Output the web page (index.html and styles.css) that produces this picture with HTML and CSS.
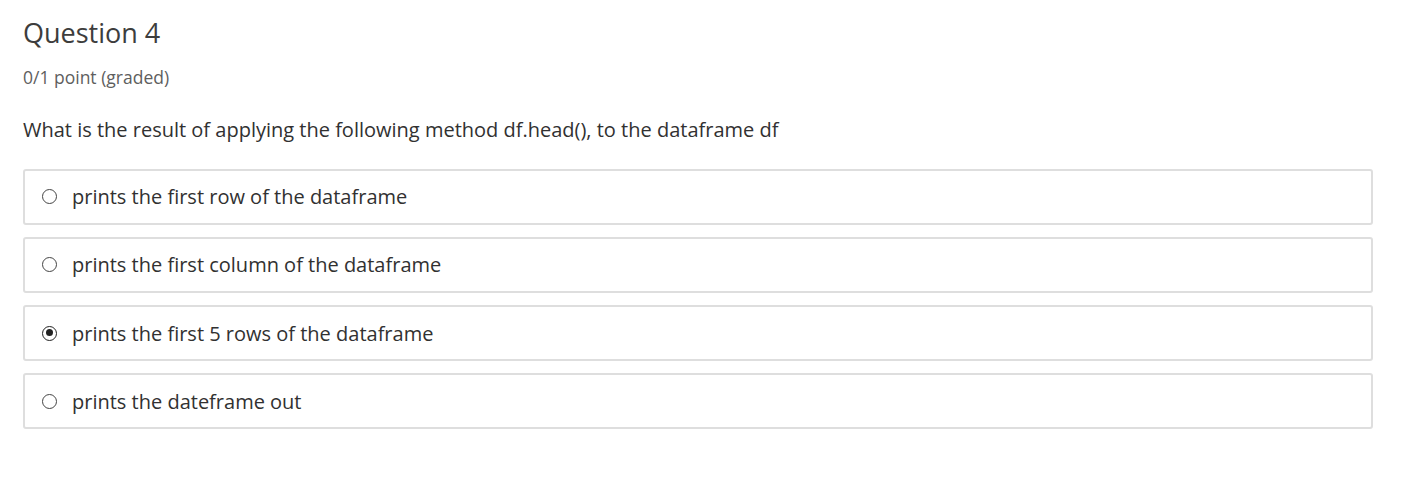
FILE: index.html
```html
<!DOCTYPE html>
<html>
<head>
<meta charset="utf-8">
<link rel="stylesheet" href="styles.css">
</head>
<body>
<div class="problem">
  <h3 class="title">Question 4</h3>
  <div class="points">0/1 point (graded)</div>
  <p class="prompt">What is the result of applying the following method df.head(), to the dataframe df</p>
  <div class="choices">
    <label class="choice"><span class="radio"></span><span class="text">prints the first row of the dataframe</span></label>
    <label class="choice"><span class="radio"></span><span class="text">prints the first column of the dataframe</span></label>
    <label class="choice"><span class="radio checked"></span><span class="text">prints the first 5 rows of the dataframe</span></label>
    <label class="choice"><span class="radio"></span><span class="text">prints the dateframe out</span></label>
  </div>
</div>
</body>
</html>
```
FILE: styles.css
```css
html, body {
  margin: 0;
  padding: 0;
  background: #fff;
}
body {
  font-family: "Open Sans", "DejaVu Sans", sans-serif;
  color: #313131;
}
.problem {
  padding: 14px 52px 0 23px;
}
.title {
  margin: 0;
  font-size: 27px;
  font-weight: 400;
  color: #3d3d3d;
  line-height: 38px;
}
.points {
  margin-top: 13px;
  font-size: 17.5px;
  color: #5e5e5e;
  line-height: 24px;
}
.prompt {
  margin: 27px 0 0 0;
  font-size: 20px;
  line-height: 28px;
  color: #313131;
}
.choices {
  margin-top: 24.5px;
  display: flex;
  flex-direction: column;
  gap: 12.3px;
}
.choice {
  display: flex;
  align-items: center;
  height: 52px;
  border: 2px solid #dedede;
  border-radius: 3px;
  padding-left: 17px;
  font-size: 20px;
  color: #313131;
}
.radio {
  width: 15px;
  height: 15px;
  border: 1.3px solid #444;
  border-radius: 50%;
  box-sizing: border-box;
  margin-right: 15px;
  flex-shrink: 0;
  position: relative;
}
.radio.checked {
  border: 1.5px solid #222;
}
.radio.checked::after {
  content: "";
  position: absolute;
  left: 2.5px;
  top: 2.5px;
  width: 7px;
  height: 7px;
  border-radius: 50%;
  background: #222;
}
```
